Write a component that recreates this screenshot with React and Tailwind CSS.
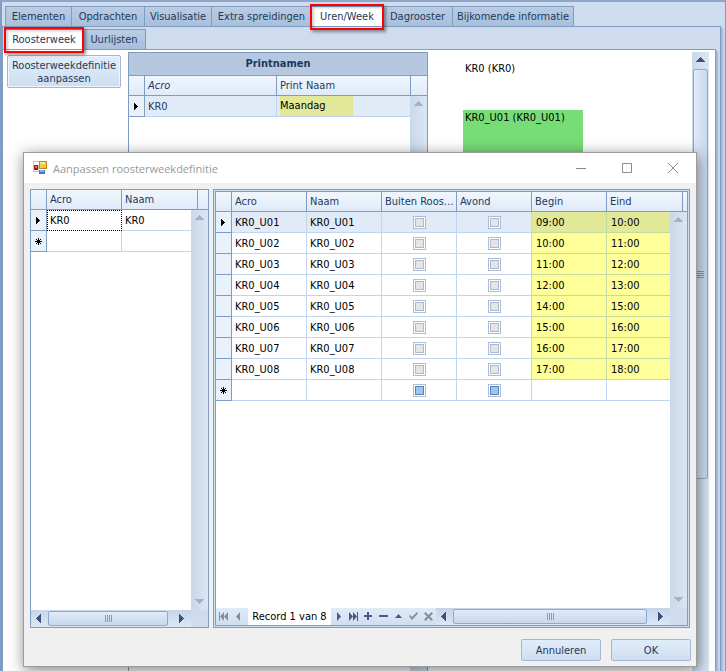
import { useState } from "react";
import clsx from "clsx";

const MAIN_TABS = [
  { label: "Elementen", width: "w-[67px]" },
  { label: "Opdrachten", width: "w-[73px]" },
  { label: "Visualisatie", width: "w-[67px]" },
  { label: "Extra spreidingen", width: "w-[100px]" },
  { label: "Uren/Week", width: "w-[71px]", marked: true },
  { label: "Dagrooster", width: "w-[70px]" },
  { label: "Bijkomende informatie", width: "w-[121px]" },
];

const SUB_TABS = [
  { label: "Roosterweek", width: "w-[78px]", marked: true },
  { label: "Uurlijsten", width: "w-[63px]" },
];

// no hour starts at 13:00
const HOURS = [9, 10, 11, 12, 14, 15, 16, 17].map((h, i) => ({
  name: `KR0_U0${i + 1}`,
  begin: `${String(h).padStart(2, "0")}:00`,
  end: `${h + 1}:00`,
}));

const HOUR_WIDTHS = ["w-[16px]", "w-[75px]", "w-[75px]", "w-[75px]", "w-[75px]", "w-[75px]", "w-[76px]", "w-auto"];
const WEEK_WIDTHS = ["w-[16px]", "w-[75px]", "w-[76px]", "w-auto"];
const PRINT_WIDTHS = ["w-[16px]", "w-[132px]", "w-[134px]", "w-auto"];

/* ---------- icons ---------- */

const ARROWS = {
  up: "M7 4h1v1h1v1h1v1h1v1h1v1H3V8h1V7h1V6h1V5h1z",
  down: "M3 5h9v1h-1v1h-1v1H9v1H8v1H7V9H6V8H5V7H4V6H3z",
  left: "M9 3v9H8v-1H7v-1H6V9H5V8H4V7h1V6h1V5h1V4h1V3z",
  right: "M5 3v9h1v-1h1v-1h1V9h1V8h1V7H9V6H8V5H7V4H6V3z",
};

function Arrow({ dir, muted }) {
  return (
    <svg width="15" height="15" viewBox="0 0 15 15" className={muted ? "fill-[#a3b1ca]" : "fill-[#414f7a]"} shapeRendering="crispEdges">
      <path d={ARROWS[dir]} />
    </svg>
  );
}

function RowPointer() {
  return (
    <svg width="5" height="7" viewBox="0 0 5 7" className="mx-auto fill-black" shapeRendering="crispEdges">
      <path d="M0 0h1v1h1v1h1v1h1v1h-1v1h-1v1h-1v1h-1z" />
    </svg>
  );
}

function NewRowMark() {
  return (
    <svg width="7" height="7" viewBox="0 0 7 7" className="mx-auto stroke-black" fill="none">
      <path d="M3.5 0v7M0 3.5h7M1 1l5 5M6 1l-5 5" />
    </svg>
  );
}

const NAV_SHAPES = {
  first: <path d="M1 1h1v9H1zM6 1v9L2 5.500zM10 1v9L6 5.500z" />,
  prev: <path d="M7 1v9L3 5.500z" />,
  next: <path d="M4 1v9l4-4.500z" />,
  last: <path d="M1 1v9l4-4.500zM5 1v9l4-4.500zM9 1h1v9H9z" />,
  add: <path d="M4 1h2v3h3v2H6v3H4V6H1V4h3z" />,
  remove: <path d="M1 4h9v2H1z" />,
  edit: <path d="M5.500 3L9 7H2z" />,
  post: <path d="M1 5l1-1 2 2 5-5 1 1.500L4 9z" />,
  cancel: <path d="M2.500 1l3 3 3-3L10 2.500l-3 3 3 3L8.500 10l-3-3-3 3L1 8.500l3-3-3-3z" />,
};

function NavButton({ kind, label, muted }) {
  return (
    <button type="button" aria-label={label} className="flex w-[15px] items-center justify-center">
      <svg width="11" height="11" viewBox="0 0 11 11" className={muted ? "fill-[#8c8c8e]" : "fill-[#4a5a86]"}>
        {NAV_SHAPES[kind]}
      </svg>
    </button>
  );
}

function AppIcon() {
  return (
    <svg width="14" height="14" viewBox="0 0 14 14" shapeRendering="crispEdges">
      <path d="M0 0h6v11H0z" fill="#c4c4c4" />
      <path d="M1 1h5v3H1zM1 9h5v1H1z" fill="#fff" />
      <path d="M1 4h4v5H1z" fill="#b3170e" />
      <path d="M2 5h2v2H2z" fill="#f0675a" />
      <path d="M6 0h8v8H6z" fill="#b98a1c" />
      <path d="M7 1h6v6H7z" fill="#fcc93a" />
      <path d="M7 1h5v2H7z" fill="#ffe48e" />
      <path d="M6 9h6v4H6z" fill="#3f77cf" />
      <path d="M7 9h4v2H7z" fill="#82b2f2" />
    </svg>
  );
}

/* ---------- scroll bars ---------- */

function Grip({ vertical }) {
  return (
    <span className={clsx("flex gap-px", vertical && "flex-col")}>
      {[0, 1, 2, 3].map((i) => (
        <span key={i} className={clsx("bg-[#7f9cc6]", vertical ? "h-px w-[7px]" : "h-[7px] w-px")} />
      ))}
    </span>
  );
}

function VScroll({ muted = true, thumb, className }) {
  return (
    <div className={clsx("flex w-[17px] flex-col items-center justify-between bg-linear-to-r from-[#c9d8ea] to-[#dae6f3]", className)}>
      <button type="button" aria-label="Omhoog" className="flex h-[17px] items-center">
        <Arrow dir="up" muted={muted} />
      </button>
      {thumb || (
        <button type="button" aria-label="Omlaag" className="flex h-[17px] items-center">
          <Arrow dir="down" muted={muted} />
        </button>
      )}
    </div>
  );
}

function HScroll() {
  return (
    <div className="flex h-[17px] min-w-0 flex-1 items-center bg-linear-to-b from-[#c5d5e9] to-[#dce7f4]">
      <button type="button" aria-label="Links" className="flex w-[17px] shrink-0 justify-center">
        <Arrow dir="left" />
      </button>
      <div className="flex h-[15px] flex-1 items-center justify-center rounded-[2px] border border-[#8daad2] bg-linear-to-b from-[#e2ebf7] to-[#c7d9ed]">
        <Grip />
      </div>
      <button type="button" aria-label="Rechts" className="flex w-[23px] shrink-0 justify-center pl-1">
        <Arrow dir="right" />
      </button>
    </div>
  );
}

/* ---------- grids ---------- */

function Columns({ widths }) {
  return (
    <colgroup>
      {widths.map((w, i) => <col key={i} className={w} />)}
    </colgroup>
  );
}

function Head({ labels, italic }) {
  return (
    <thead>
      <tr className="h-[20px] bg-linear-to-b from-[#f0f6fd] to-[#dfeaf8] text-left text-[#1e395b]">
        <td className="border-r border-b border-[#7f9cc3]" />
        {labels.map((label) => (
          <th key={label} className={clsx("truncate border-r border-b border-[#7f9cc3] pl-[3px] font-normal", label === italic && "italic")}>
            {label}
          </th>
        ))}
        <td className="border-b border-[#7f9cc3]" />
      </tr>
    </thead>
  );
}

function Indicator({ children }) {
  return <td className="border-r border-b border-[#7f9cc3] bg-[#e9f1fb]">{children}</td>;
}

const CELL = "border-r border-b border-[#c1d5f2] px-[3px]";

function Check({ label, empty }) {
  return (
    <input
      type="checkbox"
      aria-label={label}
      className={clsx(
        "mx-auto block size-[13px] appearance-none border border-[#a8bedf]",
        empty
          ? "bg-[#a5c5e6] shadow-[inset_0_0_0_1px_#fff,inset_0_0_0_2px_#5b80b0]"
          : "bg-[#e4e5e8] shadow-[inset_0_0_0_1px_#fff,inset_0_0_0_2px_#b4b7c2] checked:bg-[#5b80b0]"
      )}
    />
  );
}

function HoursGrid() {
  return (
    <div className="flex min-w-0 flex-1 border border-[#7f9cc3] bg-[#cfdff2] p-px">
      <div className="flex min-w-0 flex-1 flex-col border border-[#7f9cc3] bg-white">
        <div className="grid flex-1 grid-cols-[1fr_17px] grid-rows-[20px_1fr]">
          <table className="col-span-2 col-start-1 row-span-2 row-start-1 w-full table-fixed border-separate border-spacing-0 self-start">
            <Columns widths={HOUR_WIDTHS} />
            <Head labels={["Acro", "Naam", "Buiten Rooster", "Avond", "Begin", "Eind"]} />
            <tbody>
              {HOURS.map((row, i) => {
                const time = clsx("border-r border-b border-[#c5d9a0] px-1", i === 0 ? "bg-[#e1e998]" : "bg-[#ffff99]");
                return (
                  <tr key={row.name} className={clsx("h-[21px]", i === 0 && "bg-[#e1ebf7]")}>
                    <Indicator>{i === 0 && <RowPointer />}</Indicator>
                    <td className={CELL}>{row.name}</td>
                    <td className={CELL}>{row.name}</td>
                    <td className={CELL}><Check label={`Buiten rooster ${row.name}`} /></td>
                    <td className={CELL}><Check label={`Avond ${row.name}`} /></td>
                    <td className={time}>{row.begin}</td>
                    <td className={time}>{row.end}</td>
                    <td />
                  </tr>
                );
              })}
              <tr className="h-[21px]">
                <Indicator><NewRowMark /></Indicator>
                <td className={CELL} />
                <td className={CELL} />
                <td className={CELL}><Check label="Buiten rooster nieuw" empty /></td>
                <td className={CELL}><Check label="Avond nieuw" empty /></td>
                <td className={CELL} />
                <td className={CELL} />
                <td />
              </tr>
            </tbody>
          </table>
          <VScroll className="z-10 col-start-2 row-start-2" />
        </div>
        <div className="flex h-[17px] bg-[#cfdff0]">
          <div className="flex w-[32px] bg-linear-to-b from-[#e0ebf8] to-[#cfdff0]">
            <NavButton kind="first" label="Eerste" muted />
            <NavButton kind="prev" label="Vorige" muted />
          </div>
          <span className="w-[83px] bg-white text-center leading-[18px] text-black">Record 1 van 8</span>
          <div className="flex bg-linear-to-b from-[#e0ebf8] to-[#cfdff0]">
            <NavButton kind="next" label="Volgende" />
            <NavButton kind="last" label="Laatste" />
            <NavButton kind="add" label="Toevoegen" />
            <NavButton kind="remove" label="Verwijderen" />
            <NavButton kind="edit" label="Bewerken" />
            <NavButton kind="post" label="Opslaan" muted />
            <NavButton kind="cancel" label="Annuleer wijziging" muted />
          </div>
          <HScroll />
          <span className="w-[17px] bg-[#cfdcee]" />
        </div>
      </div>
    </div>
  );
}

function WeekGrid() {
  return (
    <div className="flex w-[179px] shrink-0 flex-col border border-[#7f9cc3] bg-white">
      <div className="grid flex-1 grid-cols-[1fr_17px] grid-rows-[20px_1fr]">
        <table className="col-span-2 col-start-1 row-span-2 row-start-1 w-full table-fixed border-separate border-spacing-0 self-start">
          <Columns widths={WEEK_WIDTHS} />
          <Head labels={["Acro", "Naam"]} />
          <tbody>
            <tr className="h-[21px]">
              <Indicator><RowPointer /></Indicator>
              <td className="border border-dotted border-black px-[2px]">KR0</td>
              <td className={CELL}>KR0</td>
              <td />
            </tr>
            <tr className="h-[21px]">
              <Indicator><NewRowMark /></Indicator>
              <td className={CELL} />
              <td className={CELL} />
              <td />
            </tr>
          </tbody>
        </table>
        <VScroll className="z-10 col-start-2 row-start-2" />
      </div>
      <div className="flex">
        <HScroll />
        <span className="w-[17px] bg-[#cfdcee]" />
      </div>
    </div>
  );
}

function PrintNames() {
  return (
    <div className="mt-[2px] flex w-[300px] flex-col border-x border-t border-[#7f9cc3] bg-white">
      <h2 className="h-[23px] border-b border-[#7f9cc3] bg-[#b5c8e0] text-center leading-[22px] font-bold text-[#1e395b]">Printnamen</h2>
      <div className="grid flex-1 grid-cols-[1fr_17px] grid-rows-[20px_1fr]">
        <table className="col-span-2 col-start-1 row-span-2 row-start-1 w-full table-fixed border-separate border-spacing-0 self-start">
          <Columns widths={PRINT_WIDTHS} />
          <Head labels={["Acro", "Print Naam"]} italic="Acro" />
          <tbody>
            <tr className="h-[21px] bg-[#e1ebf7]">
              <Indicator><RowPointer /></Indicator>
              <td className={CELL}>KR0</td>
              <td className={CELL}>
                <span className="block w-[73px] bg-[#e1e998] leading-[20px] text-black">Maandag</span>
              </td>
              <td />
            </tr>
          </tbody>
        </table>
        <VScroll className="z-10 col-start-2 row-start-2" />
      </div>
    </div>
  );
}

/* ---------- tabs, buttons, dialog ---------- */

function TabRow({ tabs, active, onSelect, className }) {
  return (
    <div role="tablist" className={clsx("flex", className)}>
      {tabs.map((tab, i) => (
        <button
          key={tab.label}
          type="button"
          role="tab"
          aria-selected={i === active}
          onClick={() => onSelect(i)}
          className={clsx(
            "relative h-[20px] shrink-0 border-t border-r border-[#7f9cc3] text-center whitespace-nowrap first:border-l",
            tab.width,
            i === active ? "bg-white" : "bg-linear-to-b from-[#b9cce3] to-[#a8bfdb]"
          )}
        >
          {tab.label}
          {tab.marked && (
            <span className="absolute -inset-x-[2px] -top-[3px] -bottom-[4px] z-10 border-2 border-[#fb0007] shadow-[2px_2px_3px_#00000066,inset_2px_2px_3px_#00000033]" />
          )}
        </button>
      ))}
    </div>
  );
}

function DialogButton({ children }) {
  return (
    <button type="button" className="h-[22px] w-[80px] rounded-[2px] border border-[#a3b7d5] bg-linear-to-b from-[#e0edfb] to-[#cfdff0] text-[#1e395b]">
      {children}
    </button>
  );
}

function Dialog() {
  return (
    <div
      role="dialog"
      aria-label="Aanpassen roosterweekdefinitie"
      className="absolute top-[150px] right-[28px] bottom-[4px] left-[21px] z-20 flex flex-col border border-[#9b9b9b] bg-[#f0f0f0] text-black shadow-[1px_3px_14px_#00000080]"
    >
      <div className="flex h-[30px] items-center bg-white pl-[9px]">
        <AppIcon />
        <h1 className="flex-1 pl-[6px] font-['Open_Sans',sans-serif] text-[#999]">Aanpassen roosterweekdefinitie</h1>
        {[
          ["Minimaliseren", "M0 5.500h10"],
          ["Maximaliseren", "M.5 .5h9v9h-9z"],
          ["Sluiten", "M0 0l10 10M10 0L0 10"],
        ].map(([label, d]) => (
          <button key={label} type="button" aria-label={label} className="flex w-[46px] justify-center">
            <svg width="10" height="10" viewBox="0 0 10 10" fill="none" className="stroke-[#8a8a8a]">
              <path d={d} />
            </svg>
          </button>
        ))}
      </div>
      <div className="flex flex-1 gap-1 px-[6px] pt-[6px]">
        <WeekGrid />
        <HoursGrid />
      </div>
      <div className="flex justify-end gap-[10px] px-[5px] pt-[11px] pb-[5px]">
        <DialogButton>Annuleren</DialogButton>
        <DialogButton>OK</DialogButton>
      </div>
    </div>
  );
}

export default function App() {
  const [mainTab, setMainTab] = useState(4);
  const [subTab, setSubTab] = useState(0);

  return (
    <div className="relative flex h-screen flex-col overflow-hidden border-t-2 border-r border-l-2 border-t-[#8fa6c8] border-r-[#7f9cc3] border-l-[#7f9cc3] bg-[#cfdcee] pt-1 font-['DejaVu_Sans_Condensed','DejaVu_Sans',sans-serif] text-[11px] leading-[13px] text-[#1e395b]">
      <TabRow tabs={MAIN_TABS} active={mainTab} onSelect={setMainTab} className="pl-[3px]" />

      <div className="mr-1 flex flex-1 flex-col border-t border-r border-l border-[#7f9cc3] pt-[2px] shadow-[2px_2px_2px_#9fb4d3]">
        <TabRow tabs={SUB_TABS} active={subTab} onSelect={setSubTab} className="pl-[2px]" />

        <div className="mr-1 flex flex-1 border-t border-r border-[#7f9cc3] bg-white pr-[6px] shadow-[2px_2px_2px_#9fb4d3]">
          <button
            type="button"
            className="mt-[5px] mr-[7px] ml-1 h-[33px] w-[114px] rounded-[2px] border border-[#a3b7d5] bg-linear-to-b from-[#e0edfb] to-[#cfdff0] shadow-[inset_0_0_0_1px_#eef5fd]"
          >
            Roosterweekdefinitie aanpassen
          </button>

          <PrintNames />

          <div className="flex-1 pt-[12px] pl-[35px] text-black">
            <p className="pl-[2px]">KR0 (KR0)</p>
            <div className="mt-[35px] h-[84px] w-[120px] bg-[#77dd77] pt-[1px] pl-[2px]">KR0_U01 (KR0_U01)</div>
          </div>

          <VScroll
            muted={false}
            className="mt-[2px]"
            thumb={
              <div className="mb-auto flex h-[410px] w-[15px] items-center justify-center rounded-[2px] border border-[#8daad2] bg-linear-to-r from-[#e2ebf7] to-[#c7d9ed]">
                <Grip vertical />
              </div>
            }
          />
        </div>
      </div>

      <Dialog />
    </div>
  );
}
